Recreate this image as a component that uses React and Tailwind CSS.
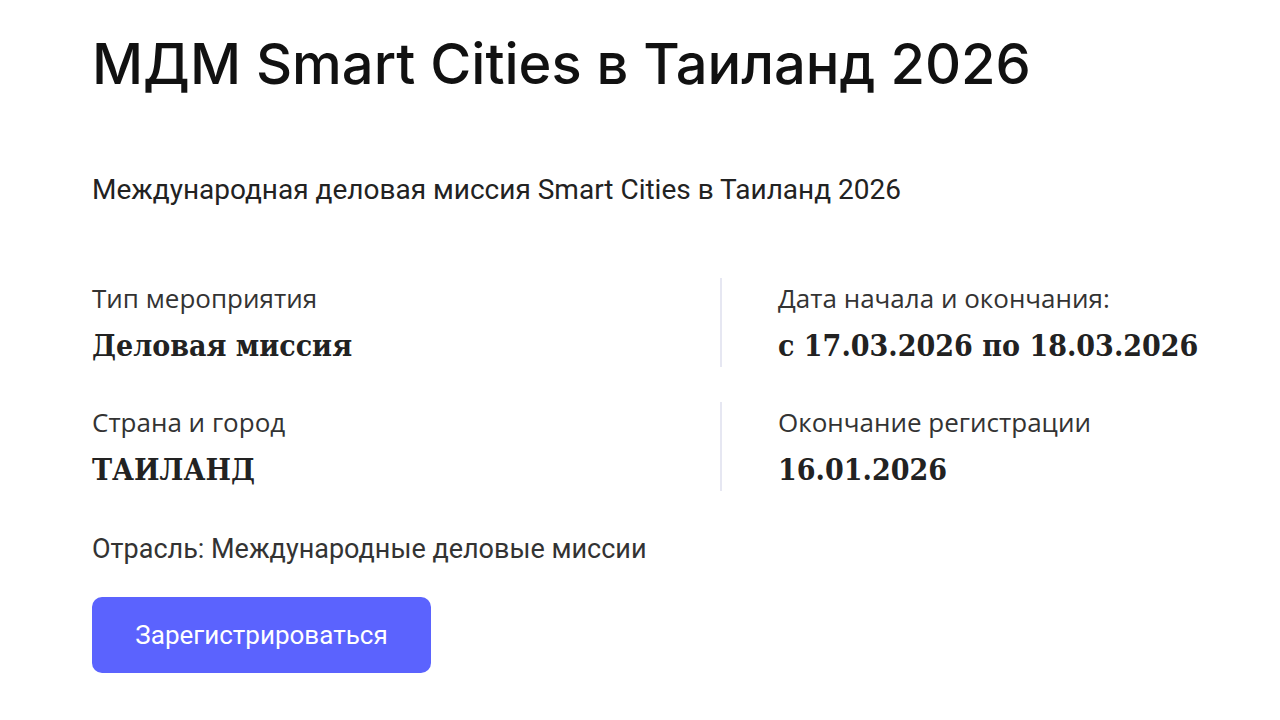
import React from "react";

const Info = ({ label, value, divider }) => (
  <div className={`flex flex-col h-[89px] pt-[3px] ${divider ? "border-l-2 border-[#e6e7f2] pl-[56px]" : ""}`}>
    <span className="text-[26px] leading-[34px] text-[#333] font-['Open_Sans',sans-serif]">{label}</span>
    <span className="mt-[13px] text-[30px] leading-[36px] font-bold text-[#222] whitespace-nowrap font-['DejaVu_Serif_Condensed','Liberation_Serif',serif]">{value}</span>
  </div>
);

export default function App() {
  return (
    <div className="min-h-screen bg-white px-[92px] pt-[28px]">
      <h1 className="text-[56px] leading-[72px] font-medium text-[#111] font-['Inter',sans-serif]">
        МДМ Smart Cities в Таиланд 2026
      </h1>
      <p className="mt-[72px] text-[28px] leading-[36px] text-[#222] font-['Roboto',sans-serif]">
        Международная деловая миссия Smart Cities в Таиланд 2026
      </p>
      <div className="mt-[70px] grid grid-cols-[628px_1fr] gap-y-[35px]">
        <Info label="Тип мероприятия" value="Деловая миссия" />
        <Info label="Дата начала и окончания:" value="с 17.03.2026 по 18.03.2026" divider />
        <Info label="Страна и город" value="ТАИЛАНД" />
        <Info label="Окончание регистрации" value="16.01.2026" divider />
      </div>
      <p className="mt-[40px] text-[27px] leading-[36px] text-[#333] font-['Roboto',sans-serif]">
        Отрасль: Международные деловые миссии
      </p>
      <button className="mt-[30px] w-[339px] h-[76px] rounded-[10px] bg-[#5b63fe] text-white text-[26px] font-['Roboto',sans-serif]">
        Зарегистрироваться
      </button>
    </div>
  );
}
